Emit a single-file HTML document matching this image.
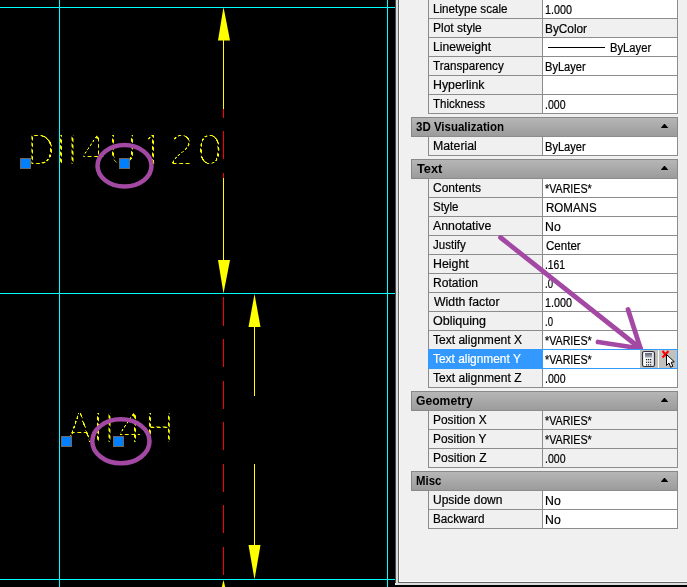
<!DOCTYPE html>
<html><head><meta charset="utf-8"><title>Properties</title>
<style>
html,body{margin:0;padding:0;background:#000;}
body{width:687px;height:587px;overflow:hidden;position:relative;font-family:"Liberation Sans",sans-serif;font-size:12px;color:#000;}
#cv{position:absolute;left:0;top:0;}
#panel{position:absolute;left:395px;top:0;width:292px;height:585px;background:#f0f0f0;}
.e{position:absolute;top:0;height:585px;}
.r{position:absolute;left:33px;width:250px;height:20px;box-sizing:border-box;border:1px solid #8c8c8c;background:#f0f0f0;}
.r .l{position:absolute;left:0;top:0;width:113px;height:18px;border-right:1px solid #8c8c8c;}
.r .v{position:absolute;left:114px;top:0;width:134px;height:18px;background:#fff;}
.r .v.ro{background:#f0f0f0;}
.t{position:absolute;top:2px;white-space:nowrap;line-height:14px;transform-origin:0 50%;-webkit-text-stroke:0.2px currentColor;}
.v .t{top:3px;}
.h{position:absolute;left:16px;width:267px;height:20px;box-sizing:border-box;border:1px solid #888;background:linear-gradient(#b6b6b6,#9b9b9b);}
.h .t{top:2px;font-weight:bold;-webkit-text-stroke:0;}
.h i{position:absolute;right:8.5px;top:5.6px;width:8px;height:4.6px;background:#000;clip-path:polygon(50% 0,100% 100%,0 100%);}
.sel{border-color:#3399ff;z-index:2;}
.sel .l{background:#3399ff;color:#fff;border-right-color:#3399ff;}
.b{position:absolute;top:0;width:18px;height:18px;background:#c3c1be;}
</style></head><body>
<svg id="cv" width="396" height="587" viewBox="0 0 396 587">
<defs>
<pattern id="dash" width="4.6" height="8" patternUnits="userSpaceOnUse" patternTransform="rotate(-45)"><rect width="4.6" height="8" fill="#fff"/><rect width="1.9" height="8" fill="#000"/></pattern>
<filter id="bo" filterUnits="userSpaceOnUse" x="0" y="100" width="396" height="380" color-interpolation-filters="sRGB"><feComponentTransfer><feFuncR type="linear" slope="2.4" intercept="-0.15"/><feFuncG type="linear" slope="2.4" intercept="-0.15"/></feComponentTransfer></filter>
<mask id="dm" maskUnits="userSpaceOnUse" x="0" y="0" width="396" height="587"><rect width="396" height="587" fill="url(#dash)"/></mask>
</defs>
<text y="164.7" mask="url(#dm)" filter="url(#bo)" font-family="Liberation Sans, sans-serif" font-size="45" fill="#ff0" stroke="#000" stroke-width="2.7" text-anchor="middle"><tspan x="41.2" textLength="27.20" lengthAdjust="spacingAndGlyphs">D</tspan><tspan x="61.2">I</tspan><tspan x="72.6">I</tspan><tspan x="93.4">4</tspan><tspan x="122.6" textLength="29.14" lengthAdjust="spacingAndGlyphs">U</tspan><tspan x="152.5" textLength="19.35" lengthAdjust="spacingAndGlyphs" stroke-width="2.2">1</tspan><tspan x="181.2">2</tspan><tspan x="209.8">0</tspan></text>
<path d="M140 160H151.4V167H140ZM154.2 160H164V167H154.2Z" fill="#000"/>
<text y="442.7" mask="url(#dm)" filter="url(#bo)" font-family="Liberation Sans, sans-serif" font-size="45" fill="#ff0" stroke="#000" stroke-width="2.7" text-anchor="middle"><tspan x="79.4" textLength="25.46" lengthAdjust="spacingAndGlyphs">A</tspan><tspan x="97.9">I</tspan><tspan x="109.4">I</tspan><tspan x="130.1">4</tspan><tspan x="159.4" textLength="29.14" lengthAdjust="spacingAndGlyphs">H</tspan></text>
<g shape-rendering="crispEdges">
<rect x="0" y="7" width="395" height="1" fill="#0ff"/>
<rect x="0" y="293" width="395" height="1" fill="#0ff"/>
<rect x="0" y="579" width="395" height="1" fill="#0ff"/>
<rect x="59" y="0" width="1" height="587" fill="#0ff"/>
<rect x="387" y="0" width="1" height="587" fill="#0ff"/>
<path d="M223.5 89.6V576" stroke="#f00" stroke-width="1" stroke-dasharray="28.2 13.36" fill="none"/>
<rect x="223" y="40" width="1" height="69" fill="#ff0"/>
<rect x="223" y="178" width="1" height="83" fill="#ff0"/>
<rect x="254" y="326" width="1" height="70" fill="#ff0"/>
<rect x="254" y="464" width="1" height="82" fill="#ff0"/>
</g>
<g fill="#ff0">
<path d="M223.5 7 L230 40.5 L218 40.5Z"/>
<path d="M223.5 293.5 L230 260 L218 260Z"/>
<path d="M254.5 294 L260.5 327 L248.5 327Z"/>
<path d="M254.5 579.5 L260.5 545 L248.5 545Z"/>
<path d="M223.5 580 L225.2 587 L221.8 587Z"/>
</g>
<rect x="20.5" y="158.5" width="10" height="10" fill="#0080ff" stroke="#6a6764" stroke-width="1"/><rect x="119.5" y="158.5" width="10" height="10" fill="#0080ff" stroke="#6a6764" stroke-width="1"/><rect x="61.5" y="436.5" width="10" height="10" fill="#0080ff" stroke="#6a6764" stroke-width="1"/><rect x="113.5" y="436.5" width="10" height="10" fill="#0080ff" stroke="#6a6764" stroke-width="1"/>
<ellipse cx="124.5" cy="165.8" rx="27" ry="20.7" fill="none" stroke="#a349a4" stroke-width="4.5"/>
<ellipse cx="120.9" cy="441.3" rx="28.6" ry="22" fill="none" stroke="#a349a4" stroke-width="4.5"/>
</svg>
<div id="panel"><div class="e" style="left:0;width:1px;background:#4a4a4a;height:583px"></div><div class="e" style="left:1px;width:291px;background:#dcdcdc;border-bottom-left-radius:2px"></div><div class="e" style="left:3px;width:289px;background:#666;height:583px"></div><div class="e" style="left:4px;width:288px;background:#fcfcfc;height:582px"></div><div class="e" style="left:5px;width:287px;background:#f0f0f0;height:581px"></div>
<div class="r" style="top:-1px"><div class="l"><span class="t" style="left:3.72px;transform:scaleX(0.9720)">Linetype scale</span></div><div class="v"><span class="t" style="left:1.65px;transform:scaleX(0.8982)">1.000</span></div></div>
<div class="r" style="top:18px"><div class="l"><span class="t" style="left:3.70px;transform:scaleX(1.0016)">Plot style</span></div><div class="v ro"><span class="t" style="left:2.01px;transform:scaleX(0.9851)">ByColor</span></div></div>
<div class="r" style="top:37px"><div class="l"><span class="t" style="left:3.69px;transform:scaleX(1.0117)">Lineweight</span></div><div class="v"><div style="position:absolute;left:5px;top:9px;width:57px;height:1px;background:#000"></div><span class="t" style="left:66.94px;transform:scaleX(0.9354)">ByLayer</span></div></div>
<div class="r" style="top:56px"><div class="l"><span class="t" style="left:4.19px;transform:scaleX(0.9700)">Transparency</span></div><div class="v"><span class="t" style="left:2.05px;transform:scaleX(0.9238)">ByLayer</span></div></div>
<div class="r" style="top:75px"><div class="l"><span class="t" style="left:3.68px;transform:scaleX(1.0302)">Hyperlink</span></div><div class="v"></div></div>
<div class="r" style="top:94px"><div class="l"><span class="t" style="left:4.19px;transform:scaleX(0.9618)">Thickness</span></div><div class="v"><span class="t" style="left:1.92px;transform:scaleX(0.8768)">.000</span></div></div>
<div class="h" style="top:117px"><span class="t" style="left:4.24px;transform:scaleX(0.9581)">3D Visualization</span><i></i></div>
<div class="r" style="top:136px"><div class="l"><span class="t" style="left:3.69px;transform:scaleX(1.0262)">Material</span></div><div class="v"><span class="t" style="left:2.05px;transform:scaleX(0.9238)">ByLayer</span></div></div>
<div class="h" style="top:159px"><span class="t" style="left:4.70px;transform:scaleX(1.0670)">Text</span><i></i></div>
<div class="r" style="top:178px"><div class="l"><span class="t" style="left:4.04px;transform:scaleX(1.0020)">Contents</span></div><div class="v"><span class="t" style="left:2.25px;transform:scaleX(0.8915)">*VARIES*</span></div></div>
<div class="r" style="top:197px"><div class="l"><span class="t" style="left:3.85px;transform:scaleX(0.9557)">Style</span></div><div class="v"><span class="t" style="left:2.73px;transform:scaleX(0.9604)">ROMANS</span></div></div>
<div class="r" style="top:216px"><div class="l"><span class="t" style="left:4.08px;transform:scaleX(1.0283)">Annotative</span></div><div class="v"><span class="t" style="left:2.31px;transform:scaleX(1.0244)">No</span></div></div>
<div class="r" style="top:235px"><div class="l"><span class="t" style="left:3.93px;transform:scaleX(0.9609)">Justify</span></div><div class="v"><span class="t" style="left:2.55px;transform:scaleX(0.9624)">Center</span></div></div>
<div class="r" style="top:254px"><div class="l"><span class="t" style="left:3.88px;transform:scaleX(1.0304)">Height</span></div><div class="v"><span class="t" style="left:2.24px;transform:scaleX(0.8557)">.161</span></div></div>
<div class="r" style="top:273px"><div class="l"><span class="t" style="left:3.89px;transform:scaleX(1.0089)">Rotation</span></div><div class="v"><span class="t" style="left:2.28px;transform:scaleX(0.7971)">.0</span></div></div>
<div class="r" style="top:292px"><div class="l"><span class="t" style="left:4.51px;transform:scaleX(1.0233)">Width factor</span></div><div class="v"><span class="t" style="left:1.65px;transform:scaleX(0.8982)">1.000</span></div></div>
<div class="r" style="top:311px"><div class="l"><span class="t" style="left:4.07px;transform:scaleX(1.0461)">Obliquing</span></div><div class="v"><span class="t" style="left:2.28px;transform:scaleX(0.7971)">.0</span></div></div>
<div class="r" style="top:330px"><div class="l"><span class="t" style="left:4.29px;transform:scaleX(1.0033)">Text alignment X</span></div><div class="v"><span class="t" style="left:2.25px;transform:scaleX(0.8915)">*VARIES*</span></div></div>
<div class="r sel" style="top:349px"><div class="l"><span class="t" style="left:4.17px;transform:scaleX(0.9927)">Text alignment Y</span></div><div class="v"><div class="b" style="left:97px"><svg width="18" height="18" viewBox="0 0 18 18" style="position:absolute;left:0;top:0"><defs><linearGradient id="cg" x1="0" y1="0" x2="0" y2="1"><stop offset="0" stop-color="#5d6573"/><stop offset="1" stop-color="#a9afb9"/></linearGradient><linearGradient id="cb" x1="0" y1="0" x2="1" y2="0"><stop offset="0" stop-color="#fff"/><stop offset="1" stop-color="#dfe2e8"/></linearGradient></defs><rect x="2.5" y="1.5" width="12" height="15" rx="1.8" fill="url(#cb)" stroke="#2e323c" stroke-width="1.2"/><rect x="5" y="3" width="7" height="4.5" fill="url(#cg)"/><g fill="#222"><rect x="6" y="9" width="1.2" height="1.2"/><rect x="8" y="9" width="1.2" height="1.2"/><rect x="10" y="9" width="1.2" height="1.2"/><rect x="6" y="11.7" width="1.2" height="1.2"/><rect x="8" y="11.7" width="1.2" height="1.2"/><rect x="10" y="11.7" width="1.2" height="1.2"/><rect x="6" y="14.3" width="1.2" height="1.2"/><rect x="8" y="14.3" width="1.2" height="1.2"/><rect x="10" y="14.3" width="1.2" height="1.2"/></g></svg></div><div class="b" style="left:116px"><svg width="18" height="19" viewBox="0 0 18 19" style="position:absolute;left:0;top:0"><path d="M3.5 1 L9 7.5 M9.5 1 L3.5 7.5" stroke="#f00" stroke-width="2" fill="none"/><path d="M7.5 4.5 L7.5 15.5 L10 13 L11.6 17.2 L13.8 16.3 L12.2 12.3 L15.3 11.8 Z" fill="#fff" stroke="#000" stroke-width="1" stroke-linejoin="miter"/></svg></div><span class="t" style="left:2.25px;transform:scaleX(0.8915)">*VARIES*</span></div></div>
<div class="r" style="top:368px"><div class="l"><span class="t" style="left:4.29px;transform:scaleX(1.0052)">Text alignment Z</span></div><div class="v"><span class="t" style="left:1.92px;transform:scaleX(0.8768)">.000</span></div></div>
<div class="h" style="top:391px"><span class="t" style="left:4.35px;transform:scaleX(1.0120)">Geometry</span><i></i></div>
<div class="r" style="top:410px"><div class="l"><span class="t" style="left:3.70px;transform:scaleX(0.9940)">Position X</span></div><div class="v ro"><span class="t" style="left:2.25px;transform:scaleX(0.8915)">*VARIES*</span></div></div>
<div class="r" style="top:429px"><div class="l"><span class="t" style="left:3.71px;transform:scaleX(0.9922)">Position Y</span></div><div class="v ro"><span class="t" style="left:2.25px;transform:scaleX(0.8915)">*VARIES*</span></div></div>
<div class="r" style="top:448px"><div class="l"><span class="t" style="left:3.70px;transform:scaleX(1.0029)">Position Z</span></div><div class="v ro"><span class="t" style="left:1.92px;transform:scaleX(0.8768)">.000</span></div></div>
<div class="h" style="top:471px"><span class="t" style="left:4.12px;transform:scaleX(0.9487)">Misc</span><i></i></div>
<div class="r" style="top:490px"><div class="l"><span class="t" style="left:3.77px;transform:scaleX(1.0008)">Upside down</span></div><div class="v"><span class="t" style="left:2.31px;transform:scaleX(1.0244)">No</span></div></div>
<div class="r" style="top:509px"><div class="l"><span class="t" style="left:3.72px;transform:scaleX(0.9764)">Backward</span></div><div class="v"><span class="t" style="left:2.31px;transform:scaleX(1.0244)">No</span></div></div>
</div>
<svg style="position:absolute;left:0;top:0" width="687" height="587" viewBox="0 0 687 587">
<g fill="none" stroke="#a349a4" stroke-width="4.8" stroke-linecap="round" stroke-linejoin="round">
<path d="M500.5 237.5 L640.5 348.5"/><path d="M628 309.5 L640.5 348.5 L598 342"/>
</g></svg>
</body></html>
